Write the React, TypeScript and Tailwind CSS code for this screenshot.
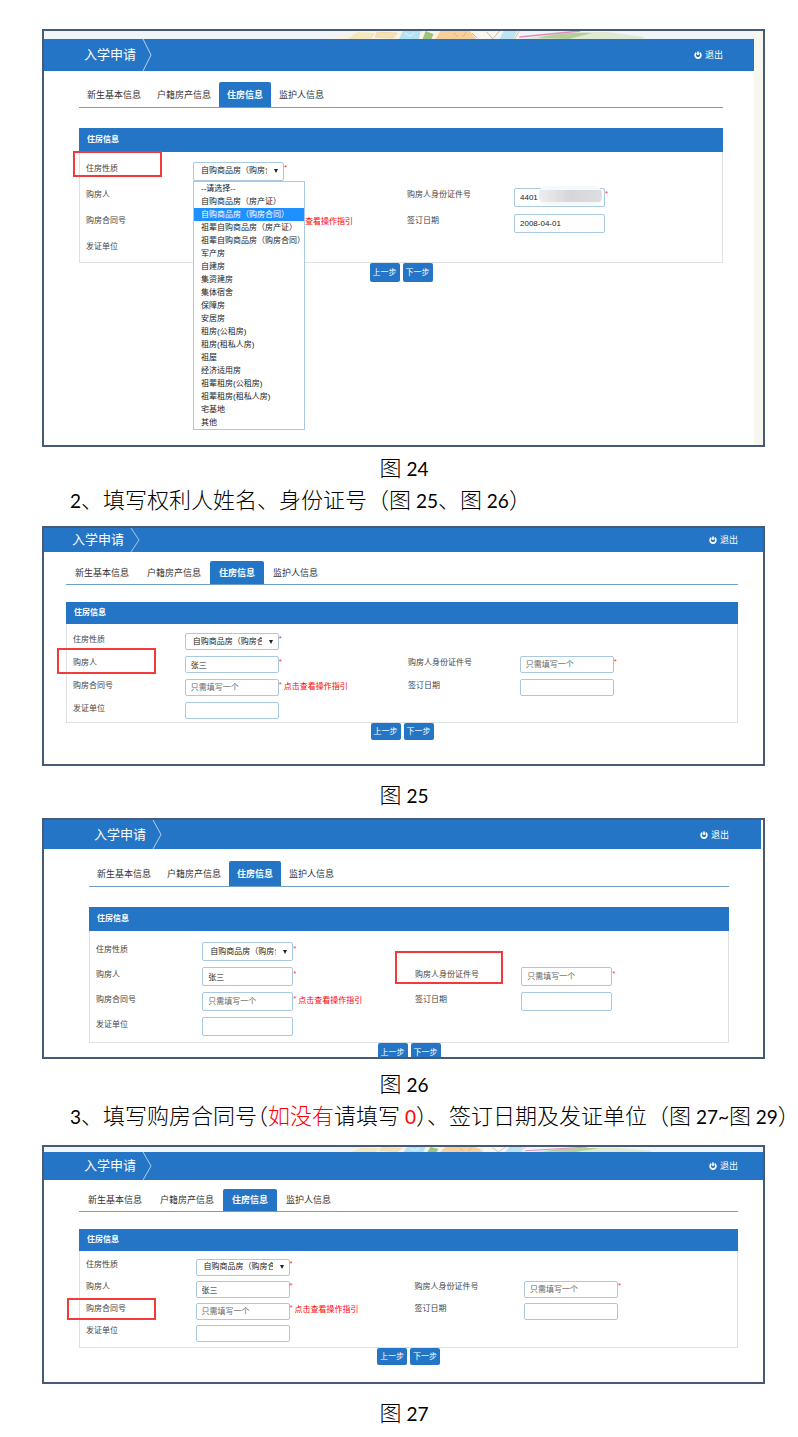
import type { ReactNode } from "react";

const housingTypes = [
  "--请选择--",
  "自购商品房（房产证）",
  "自购商品房（购房合同）",
  "祖辈自购商品房（房产证）",
  "祖辈自购商品房（购房合同）",
  "军产房",
  "自建房",
  "集资建房",
  "集体宿舍",
  "保障房",
  "安居房",
  "租房(公租房)",
  "租房(租私人房)",
  "祖屋",
  "经济适用房",
  "祖辈租房(公租房)",
  "祖辈租房(租私人房)",
  "宅基地",
  "其他",
];

const selectedType = "自购商品房（购房合同）";

type FieldName = "type" | "buyer" | "buyerId" | "contract";

interface Layout {
  id: string;
  banner?: string;
  page: string;
  header: string;
  inset: string;
  tabs: string;
  tab: string;
  sectionTitle: string;
  rows: string;
  control: string;
  button: string;
  footer: string;
}

const layouts: Record<string, Layout> = {
  fig24: {
    id: "fig24",
    banner: "h-2",
    page: "border-r-9 border-[#f7f7ef]",
    header: "h-8 pl-10 pr-[31px]",
    inset: "pl-[35px] pr-[31px]",
    tabs: "mt-[11px] h-[26px]",
    tab: "px-2",
    sectionTitle: "mt-5 h-6",
    rows: "auto-rows-[26px] pt-1.5",
    control: "h-[19px] w-[91px]",
    button: "h-[19px]",
    footer: "h-[182px]",
  },
  fig25: {
    id: "fig25",
    page: "",
    header: "h-6 pl-7 pr-[25px]",
    inset: "pl-[22px] pr-[25px]",
    tabs: "mt-[9px] h-6",
    tab: "px-[9px]",
    sectionTitle: "mt-[17px] h-[22px]",
    rows: "auto-rows-[23px] pt-1.5",
    control: "h-[17px] w-[94px]",
    button: "h-[17px]",
    footer: "h-[41px]",
  },
  fig26: {
    id: "fig26",
    page: "border-r-2 border-white",
    header: "h-[29px] pl-[50px] pr-8",
    inset: "pl-[45px] pr-8",
    tabs: "mt-3 h-[26px]",
    tab: "px-2",
    sectionTitle: "mt-5 h-6",
    rows: "auto-rows-[25px] pt-2 pb-[3px]",
    control: "h-[19px] w-[91px]",
    button: "h-[19px]",
    footer: "h-[14px]",
  },
  fig27: {
    id: "fig27",
    banner: "h-[5px]",
    page: "",
    header: "h-7 pl-10 pr-[25px]",
    inset: "pl-[35px] pr-[25px]",
    tabs: "mt-[9px] h-[23px]",
    tab: "px-[9px]",
    sectionTitle: "mt-[17px] h-[22px]",
    rows: "auto-rows-[22px] pt-[5px] pb-[3px]",
    control: "h-[17px] w-[94px]",
    button: "h-[17px]",
    footer: "h-[34px]",
  },
};

const PowerIcon = () => (
  <svg viewBox="0 0 16 16" className="h-2 w-2" fill="none" stroke="#fff" strokeWidth="3.4">
    <path d="M4.6 3.6a5.8 5.8 0 1 0 6.8 0" />
    <path d="M8 1v7" />
  </svg>
);

const BannerArt = ({ height }: { height: string }) => (
  <svg
    viewBox="0 0 720 8"
    preserveAspectRatio="none"
    className={`block w-full bg-[#f1f4f8] ${height}`}
    aria-hidden="true"
  >
    <path d="M288 8l14-5 30-3h110l-6 8z" fill="#f8f3e6" />
    <path d="M308 8l10-7 18 1-4 6z" fill="#f6e6bd" />
    <path d="M338 1l20 1-4 5-18-1z" fill="#f5e2b4" stroke="#ecc98c" strokeWidth=".6" />
    <path d="M360 8l4-8h18l-2 8z" fill="#b5e2f2" />
    <path d="M366 2l5 3 5-3" fill="none" stroke="#e6f6fb" />
    <path d="M384 8l3-8 8 3-2 5z" fill="#9cc47c" />
    <path d="M397 8l5-8h30l6 8z" fill="#f7cf9a" />
    <path d="M416 2l4 4M428 1l-3 5M434 2l5 5" stroke="#e9ae7c" />
    <path d="M442 8l-3-8h22l-4 8z" fill="#fbf7ef" />
    <path d="M449 1l6 7 7-8" fill="none" stroke="#cdb99c" />
    <path d="M462 8l4-8h14l-4 8z" fill="#bde3f1" />
    <path d="M482 0l-5 8" stroke="#e2c27e" />
    <path d="M488 8c22-6 52-7 84-7l36 5v2z" fill="#e0ead2" />
    <path d="M500 7c18-5 38-6 56-5l-24 6z" fill="#b4cf98" />
    <path d="M482 6l62-6" stroke="#e08fc0" strokeWidth="1.6" />
  </svg>
);

const RedBox = ({ className }: { className: string }) => (
  <span className={`pointer-events-none absolute z-10 border-2 border-[#f23a3a] ${className}`} />
);

interface FieldProps {
  id: string;
  label: string;
  mark?: string;
  children: ReactNode;
}

const Field = ({ id, label, mark, children }: FieldProps) => (
  <>
    <div className="relative flex items-center pb-1 pl-1.5">
      <label htmlFor={id} className="whitespace-nowrap text-[#444]">
        {label}
      </label>
      {mark && <RedBox className={mark} />}
    </div>
    <div className="relative flex items-center pl-1.5">{children}</div>
  </>
);

const inputClass =
  "shrink-0 rounded-[2px] border border-[#a9c8e4] bg-white text-[8px] text-[#222] outline-none placeholder:text-[#666]";

const Required = () => <span className="mb-1.5 w-1 shrink-0 text-[#f33]">*</span>;

const TypeOptions = () => (
  <ul
    role="listbox"
    className="absolute left-0 top-full z-20 w-28 border border-[#a9c8e4] bg-white text-[#222]"
  >
    {housingTypes.map((type) => (
      <li
        key={type}
        role="option"
        aria-selected={type === selectedType}
        className={`h-[13px] whitespace-nowrap pl-[7px] leading-[13px] ${
          type === selectedType ? "bg-[#1e90ff] text-white" : ""
        }`}
      >
        {type}
      </li>
    ))}
  </ul>
);

interface ApplicationProps {
  layout: Layout;
  buyer?: string;
  open?: boolean;
  date?: string;
  masked?: boolean;
  marks: Partial<Record<FieldName, string>>;
}

const Application = ({ layout, buyer, open, date, masked, marks }: ApplicationProps) => {
  const control = `${inputClass} pl-[5px] ${layout.control}`;
  const { id } = layout;

  return (
    <div className="ml-[42px] mr-[33px] overflow-hidden border-2 border-[#465a78] bg-white font-['Liberation_Sans','Noto_Sans_CJK_SC',sans-serif] text-[8px] font-normal leading-3">
      <div className={layout.page}>
        {layout.banner && <BannerArt height={layout.banner} />}
        <header
          className={`flex items-center justify-between bg-[#2475c5] text-white ${layout.header}`}
        >
          <div className="flex h-full items-center">
            <h2 className="text-[13px] leading-4">入学申请</h2>
            <svg
              viewBox="0 0 10 32"
              preserveAspectRatio="none"
              className="ml-1.5 h-full w-2.5"
              fill="none"
              stroke="#b8d5ef"
            >
              <path d="M1 0l8 16-8 16" />
            </svg>
          </div>
          <button type="button" className="flex items-center gap-[3px] text-[9px]">
            <PowerIcon />
            退出
          </button>
        </header>

        <div className={layout.inset}>
          <nav
            className={`flex border-b border-[#6f9fc4] text-[9px] text-[#333] ${layout.tabs}`}
          >
            {["新生基本信息", "户籍房产信息", "住房信息", "监护人信息"].map((tab) => (
              <a
                key={tab}
                href="#"
                className={`flex items-center whitespace-nowrap ${layout.tab} ${
                  tab === "住房信息" ? "rounded-t-[2px] bg-[#2475c5] font-bold text-white" : ""
                }`}
              >
                {tab}
              </a>
            ))}
          </nav>

          <h3
            className={`flex items-center bg-[#2475c5] pl-2 font-bold text-white ${layout.sectionTitle}`}
          >
            住房信息
          </h3>
          <form>
            <div
              className={`grid grid-cols-[1fr_2fr_1fr_2fr] border-x border-b border-[#dde1e5] ${layout.rows}`}
            >
              <Field id={`${id}-type`} label="住房性质" mark={marks.type}>
                <div className="relative flex">
                  <select
                    id={`${id}-type`}
                    defaultValue={selectedType}
                    className={`appearance-none pl-[7px] pr-4 ${inputClass} ${layout.control}`}
                  >
                    {housingTypes.map((type) => (
                      <option key={type}>{type}</option>
                    ))}
                  </select>
                  <svg
                    viewBox="0 0 4 4"
                    className="pointer-events-none absolute right-1.5 top-1/2 -mt-0.5 h-1 w-1"
                    fill="#222"
                  >
                    <path d="M0 0h4L2 4z" />
                  </svg>
                  {open && <TypeOptions />}
                </div>
                <Required />
              </Field>
              <div className="col-span-2" />

              <Field id={`${id}-buyer`} label="购房人" mark={marks.buyer}>
                <input id={`${id}-buyer`} defaultValue={buyer} className={control} />
                <Required />
              </Field>
              <Field id={`${id}-buyerId`} label="购房人身份证件号" mark={marks.buyerId}>
                <input
                  id={`${id}-buyerId`}
                  defaultValue={masked ? "4401" : ""}
                  placeholder="只需填写一个"
                  className={control}
                />
                {masked && (
                  <span className="absolute left-[31px] top-0.5 flex h-[19px] w-[63px] items-center overflow-hidden rounded-lg bg-[#f6f9fb]">
                    <span className="h-3 w-full bg-linear-to-r from-[#eceef0] via-[#d4d6d8] to-[#dcdee0]" />
                  </span>
                )}
                <Required />
              </Field>

              <Field id={`${id}-contract`} label="购房合同号" mark={marks.contract}>
                <input
                  id={`${id}-contract`}
                  placeholder="只需填写一个"
                  className={control}
                />
                <Required />
                <a href="#" className="mb-0.5 whitespace-nowrap pl-px text-[#f00]">
                  点击查看操作指引
                </a>
              </Field>
              <Field id={`${id}-date`} label="签订日期">
                <input id={`${id}-date`} defaultValue={date} className={control} />
              </Field>

              <Field id={`${id}-issuer`} label="发证单位">
                <input id={`${id}-issuer`} className={control} />
              </Field>
            </div>
            <div className={`flex items-start justify-center gap-[3px] ${layout.footer}`}>
              {["上一步", "下一步"].map((step) => (
                <button
                  key={step}
                  type="button"
                  className={`w-[30px] shrink-0 rounded-[2px] bg-[#2475c5] text-white ${layout.button}`}
                >
                  {step}
                </button>
              ))}
            </div>
          </form>
        </div>
      </div>
    </div>
  );
};

const Num = ({ children }: { children: ReactNode }) => (
  <span className="font-['Lato',sans-serif] text-[19px] font-normal leading-none">{children}</span>
);

const Caption = ({ children }: { children: ReactNode }) => (
  <figcaption className="pl-2.5 text-center">
    图 <Num>{children}</Num>
  </figcaption>
);

const App = () => {
  return (
    <main className="bg-white pb-2 pt-[29px] font-['Noto_Sans_CJK_SC',sans-serif] text-[22px] font-light leading-8 text-black">
      <figure>
        <Application
          layout={layouts.fig24}
          open
          masked
          date="2008-04-01"
          marks={{ type: "-left-[7px] -top-[7px] h-[26px] w-[89px]" }}
        />
        <div className="pt-[3px]">
          <Caption>24</Caption>
        </div>
      </figure>

      <p className="whitespace-nowrap pl-[70px]">
        <Num>2</Num>、填写权利人姓名、身份证号（图 <Num>25</Num>、图 <Num>26</Num>）
      </p>

      <figure className="mt-3">
        <Application
          layout={layouts.fig25}
          buyer="张三"
          marks={{ buyer: "-left-[10px] -top-[5px] h-[26px] w-[99px]" }}
        />
        <div className="pt-[11px]">
          <Caption>25</Caption>
        </div>
      </figure>

      <figure className="mt-[9px]">
        <Application
          layout={layouts.fig26}
          buyer="张三"
          marks={{ buyerId: "-left-[14px] -top-[13px] h-[33px] w-[108px]" }}
        />
        <div className="pt-[7px]">
          <Caption>26</Caption>
        </div>
      </figure>

      <p className="whitespace-nowrap pl-[70px]">
        <Num>3</Num>、填写购房合同号
        <span className="[font-feature-settings:'halt']">（</span>
        <span className="text-[#f00]">如没有</span>请填写{" "}
        <span className="text-[#f00]">
          <Num>0</Num>
        </span>
        ）、签订日期及发证单位（图 <Num>27~</Num>图 <Num>29</Num>）
      </p>

      <figure className="mt-[15px]">
        <Application
          layout={layouts.fig27}
          buyer="张三"
          marks={{ contract: "-left-[13px] -top-[2px] h-[22px] w-[89px]" }}
        />
        <div className="pt-[11px]">
          <Caption>27</Caption>
        </div>
      </figure>
    </main>
  );
};

export default App;
